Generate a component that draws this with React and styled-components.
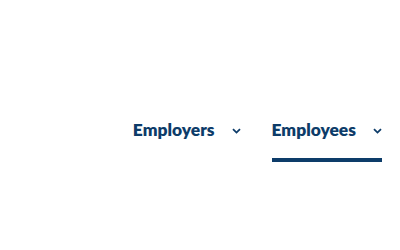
import React from 'react'
import styled, { createGlobalStyle } from 'styled-components'

const GlobalStyle = createGlobalStyle`
  html, body {
    margin: 0;
    padding: 0;
    background: #ffffff;
  }
  body {
    font-family: Lato, "Open Sans", sans-serif;
  }
`

const Page = styled.div`
  width: 400px;
  height: 250px;
  box-sizing: border-box;
  padding: 119px 18px 0 0;
  display: flex;
  justify-content: flex-end;
  align-items: flex-start;
`

const Nav = styled.nav`
  display: flex;
  gap: 31px;
`

const NavItem = styled.div`
  display: flex;
  flex-direction: column;
  cursor: pointer;
`

const NavLabel = styled.div`
  display: flex;
  align-items: center;
  gap: 17px;
  color: #0d3c69;
  font-size: 17.4px;
  font-weight: 800;
  line-height: 22px;
`

const Chevron = styled.svg`
  width: 9px;
  height: 6px;
  margin-top: 2px;
  flex: none;
`

const Underline = styled.div`
  height: 4px;
  margin-top: 17px;
  background: ${props => (props.active ? '#0d3c69' : 'transparent')};
`

const items = [
  { label: 'Employers', active: false },
  { label: 'Employees', active: true },
]

export default function App() {
  return (
    <>
      <GlobalStyle />
      <Page>
        <Nav>
          {items.map(item => (
            <NavItem key={item.label}>
              <NavLabel>
                {item.label}
                <Chevron viewBox="0 0 9 6">
                  <path d="M1 1.2 L4.5 4.6 L8 1.2" fill="none" stroke="#0d3c69" strokeWidth="1.8" />
                </Chevron>
              </NavLabel>
              <Underline active={item.active} />
            </NavItem>
          ))}
        </Nav>
      </Page>
    </>
  )
}
